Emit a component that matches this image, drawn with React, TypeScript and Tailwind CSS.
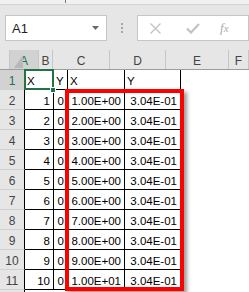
import React from 'react'
import { clsx } from 'clsx'

const cols = ['A', 'B', 'C', 'D', 'E', 'F']
const colWidths = ['w-[29px]', 'w-[14px]', 'w-[57px]', 'w-[56px]', 'w-[63px]', 'w-[20px]']

const rows: string[][] = [
  ['X', 'Y', 'X', 'Y'],
  ...Array.from({ length: 10 }).map((_, i) => [
    String(i + 1),
    '0',
    i === 9 ? '1.00E+01' : `${i + 1}.00E+00`,
    '3.04E-01',
  ]),
]

function FormulaBar() {
  return (
    <div className="relative h-[50px] bg-[#e6e6e6]">
      <div className="h-[5px] bg-[#f1f1f1] border-b border-[#d4d4d4]">
        <div className="ml-[65px] w-px h-[3px] bg-[#7a7a7a]" />
      </div>
      <div className="flex items-start pt-[10px]">
        <div className="ml-[5px] w-[102px] h-[26px] bg-white border border-[#c6c6c6] flex items-center pl-[6px] pr-[6px]">
          <span className="text-[13px] text-[#222] flex-1 pt-[1px]">A1</span>
          <svg width="8" height="5" viewBox="0 0 8 5">
            <path d="M0 0h7L3.5 4z" fill="#6a6a6a" />
          </svg>
        </div>
        <div className="ml-[14px] mt-[8px] flex flex-col gap-[2px]">
          <div className="w-[2px] h-[2px] bg-[#a6a6a6]" />
          <div className="w-[2px] h-[2px] bg-[#a6a6a6]" />
          <div className="w-[2px] h-[2px] bg-[#a6a6a6]" />
        </div>
        <div className="ml-[14px] w-[112px] h-[26px] bg-white border border-[#c6c6c6] flex items-center">
          <svg className="ml-[12px]" width="11" height="11" viewBox="0 0 11 11">
            <path d="M0.5 0.5l10 10M10.5 0.5l-10 10" stroke="#c2c2c2" strokeWidth="1.3" />
          </svg>
          <svg className="ml-[25px]" width="14" height="11" viewBox="0 0 14 11">
            <path d="M1 5.5l4 4L13 1" stroke="#c2c2c2" strokeWidth="2.2" fill="none" />
          </svg>
          <span className="ml-[20px] font-['Liberation_Serif'] italic text-[13px] text-[#ababab]">
            f<span className="text-[11px]">x</span>
          </span>
        </div>
      </div>
    </div>
  )
}

export default function App() {
  return (
    <div className="relative w-[249px] h-[292px] overflow-hidden bg-white font-['Liberation_Sans',sans-serif]">
      <FormulaBar />

      {/* column headers */}
      <div className="flex h-[20px] bg-[#e6e6e6] border-b border-[#9c9c9c]">
        <div className="w-[25px] relative border-r border-[#c6c6c6]">
          <svg className="absolute left-[14px] top-[5px]" width="9" height="13" viewBox="0 0 9 13">
            <path d="M9 0v13H0z" fill="#b8b8b8" />
          </svg>
        </div>
        {cols.map((c, i) => (
          <div
            key={c}
            className={clsx(
              colWidths[i],
              'shrink-0 border-r border-[#c6c6c6] text-center text-[12px] pt-[3px] leading-[16px]',
              i === 0 ? 'bg-[#d2d2d2] text-[#217346]' : 'text-[#444]'
            )}
          >
            {c}
          </div>
        ))}
      </div>

      {/* rows */}
      {rows.map((r, ri) => (
        <div key={ri} className="flex h-[20px]">
          <div
            className={clsx(
              'w-[25px] shrink-0 border-r border-b border-r-black border-b-[#d0d0d0] text-center text-[12px] pt-[3px] leading-[16px]',
              ri === 0 ? 'bg-[#d2d2d2] text-[#217346]' : 'bg-[#e6e6e6] text-[#444]'
            )}
          >
            {ri + 1}
          </div>
          {r.map((v, ci) => (
            <div
              key={ci}
              className={clsx(
                colWidths[ci],
                'shrink-0 overflow-hidden whitespace-nowrap text-[11.5px] text-black pt-[3px] leading-[16px] border-r border-b border-black',
                ri === 0 ? 'text-left pl-[2px]' : 'text-right pr-[3px]'
              )}
            >
              {v}
            </div>
          ))}
        </div>
      ))}
      {/* next row, cut off by the window */}
      <div className="flex h-[20px]">
        <div className="w-[25px] shrink-0 bg-[#e6e6e6] border-r border-black" />
      </div>

      {/* selected cell A1 */}
      <div className="absolute left-[24px] top-[69px] w-[30px] h-[21px] border-2 border-[#217346]" />
      <div className="absolute left-[50px] top-[87px] w-[6px] h-[6px] bg-[#217346] border border-white" />

      {/* highlight box */}
      <div className="absolute left-[65px] top-[89px] w-[119px] h-[202px] border-4 border-[#ff0000] shadow-[3px_3px_4px_rgba(0,0,0,0.4)]" />
    </div>
  )
}
